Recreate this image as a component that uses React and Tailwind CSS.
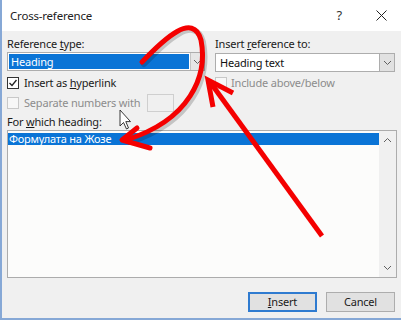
import React from 'react';

const FONT = { fontFamily: '"Noto Sans", "Liberation Sans", Arial, sans-serif' };

function Chevron({ up }) {
  return (
    <svg width="9" height="6" viewBox="0 0 9 6" className="text-[#606060]">
      <path d={up ? 'M1 5 L4.5 1.5 L8 5' : 'M1 1 L4.5 4.5 L8 1'} fill="none" stroke="currentColor" strokeWidth="1" />
    </svg>
  );
}

function Checkbox({ checked, disabled }) {
  return (
    <div className={`w-[12px] h-[12px] shrink-0 border ${disabled ? 'border-[#c8c8c8] bg-[#f7f7f7]' : 'border-[#333] bg-white'} flex items-center justify-center`}>
      {checked && (
        <svg width="10" height="10" viewBox="0 0 10 10">
          <path d="M1.5 5 L4 7.5 L8.5 2" fill="none" stroke="#222" strokeWidth="1.3" />
        </svg>
      )}
    </div>
  );
}

function Overlay() {
  return (
    <svg className="absolute inset-0 pointer-events-none" width="401" height="320" viewBox="0 0 401 320">
      {/* shadow */}
      <path d="M142 64 C 165 40, 193 14, 201 42 C 208 78, 190 122, 128 142" fill="none" stroke="rgba(0,0,0,0.18)" strokeWidth="6" strokeLinecap="round" />
      {/* curved arrow */}
      <path d="M140 62 C 163 38, 191 12, 199 40 C 206 76, 188 120, 124 140" fill="none" stroke="#f40000" strokeWidth="5" strokeLinecap="round" />
      <path d="M135 128 L120 140 L148 148" fill="none" stroke="#f40000" strokeWidth="5" strokeLinecap="round" strokeLinejoin="round" />
      {/* straight arrow */}
      <path d="M320 236 L208 82" fill="none" stroke="#f40000" strokeWidth="5" strokeLinecap="butt" />
      <path d="M211 107 L206 80 L231 93" fill="none" stroke="#f40000" strokeWidth="5" strokeLinecap="butt" strokeLinejoin="miter" />
      {/* mouse cursor */}
      <path d="M118 110 L118 126 L121.5 122.5 L124.5 129 L126.5 128 L123.8 121.6 L128.5 121.6 Z" fill="#fff" stroke="#222" strokeWidth="0.9" strokeLinejoin="round" />
    </svg>
  );
}

export default function App() {
  return (
    <div className="relative w-[401px] h-[320px] overflow-hidden bg-[#f0f0f0] text-[11px] tracking-[-0.2px] text-[#1a1a1a] whitespace-nowrap border-l-2 border-b-2 border-[#86a8d6]" style={FONT}>
      <div className="h-[31px] bg-white flex items-center pl-[8px] pr-[14px]">
        <span className="text-[11.5px] text-[#222]">Cross-reference</span>
        <span className="ml-auto mr-[34px] text-[13px] text-[#333]">?</span>
        <svg width="11" height="11" viewBox="0 0 11 11">
          <path d="M0.5 0.5 L10.5 10.5 M10.5 0.5 L0.5 10.5" stroke="#222" strokeWidth="1" />
        </svg>
      </div>

      <div className="pl-[5px] pr-[4px]">
        <div className="flex gap-[10px]">
          <div className="w-[198px] flex flex-col">
            <div className="mt-[6px] h-[14px] leading-[14px]">Reference <span className="underline">t</span>ype:</div>
            <div className="mt-[1px] h-[19px] flex border border-[#adadad] bg-white">
              <div className="flex-1 m-[1px] bg-[#0a74d6] text-white leading-[15px] pl-[2px]">Heading</div>
              <div className="w-[14px] bg-[#e6e6e6] border-l border-[#c4c4c4] flex items-center justify-center">
                <Chevron />
              </div>
            </div>
            <div className="mt-[5px] h-[14px] flex items-center gap-[5px]">
              <Checkbox checked />
              <span className="leading-[14px]">Insert as <span className="underline">h</span>yperlink</span>
            </div>
            <div className="mt-[4px] h-[18px] flex items-center">
              <Checkbox disabled />
              <span className="ml-[5px] leading-[14px] text-[#8c8c8c]">Separate numbers with</span>
              <div className="ml-auto mr-[31px] w-[27px] h-[18px] border border-[#cfcfcf] bg-[#f0f0f0]" />
            </div>
          </div>
          <div className="w-[180px] flex flex-col">
            <div className="mt-[6px] h-[14px] leading-[14px]">Insert <span className="underline">r</span>eference to:</div>
            <div className="mt-[2px] h-[19px] flex border border-[#adadad] bg-white">
              <div className="flex-1 text-[#111] leading-[17px] pl-[4px]">Heading text</div>
              <div className="w-[15px] bg-[#e1e1e1] border-l border-[#adadad] flex items-center justify-center">
                <Chevron />
              </div>
            </div>
            <div className="mt-[4px] h-[13px] flex items-center gap-[4px]">
              <Checkbox disabled />
              <span className="leading-[13px] text-[#8c8c8c]">Include above/below</span>
            </div>
          </div>
        </div>

        <div className="mt-[3px] h-[14px] leading-[14px]">For <span className="underline">w</span>hich heading:</div>
        <div className="mt-[1px] h-[148px] border border-[#acacac] bg-[#fcfcfb] flex">
          <div className="flex-1 pt-[2px]">
            <div className="h-[12px] bg-[#0a74d6] text-white leading-[12px] pl-[1px]">Формулата на Жозе</div>
          </div>
          <div className="w-[17px] bg-[#f0f0f0] flex flex-col items-center justify-between py-[6px]">
            <Chevron up />
            <Chevron />
          </div>
        </div>

        <div className="mt-[14px] flex justify-end gap-[9px] pr-[2px]">
          <div className="w-[69px] h-[20px] border-2 border-[#2f7bd0] bg-[#e1e1e1] flex items-center justify-center leading-[14px]">
            <span><span className="underline">I</span>nsert</span>
          </div>
          <div className="w-[69px] h-[20px] border border-[#adadad] bg-[#e1e1e1] flex items-center justify-center leading-[14px]">
            Cancel
          </div>
        </div>
      </div>

      <Overlay />
    </div>
  );
}
